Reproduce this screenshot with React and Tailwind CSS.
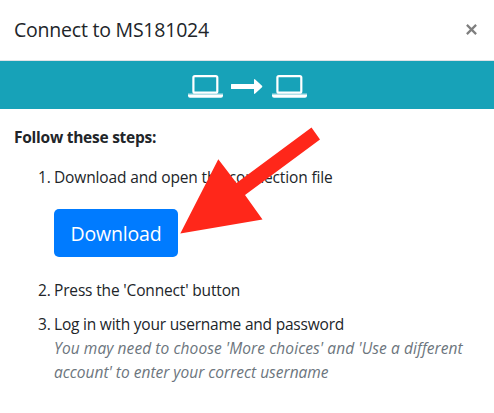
function Laptop() {
  return (
    <svg className="h-[23px] w-[35px]" viewBox="0 0 35 23" fill="none" aria-hidden="true">
      <rect x="5.4" y="1.1" width="23.900" height="16.600" rx="1.500" stroke="#fff" strokeWidth="2.200" />
      <path d="M0 18.500h35v1H0z" fill="#fff" fillOpacity=".65" />
      <path d="M0 19.500h35v1.200q0 2-2 2H2q-2 0-2-2z" fill="#fff" />
    </svg>
  );
}

function RightArrow() {
  return (
    <svg className="h-[16px] w-[32px]" viewBox="0 0 32 16" aria-hidden="true">
      <path d="M.5 5H23V1q0-1.500 1.200-.6l6.800 6.400q.6.700 0 1.400l-6.800 6.400Q23 15.500 23 14v-4H.5Q0 10 0 9.500v-4Q0 5 .5 5z" fill="#fff" />
    </svg>
  );
}

export default function App() {
  return (
    <div className="relative h-[413px] w-[494px] overflow-hidden bg-white font-['Open_Sans','Noto_Sans',sans-serif] text-[15.5px] leading-6 text-[#212529]">
      <header className="flex h-[61px] items-center justify-between border-b border-[#dee2e6] pl-[14px] pr-[17px]">
        <h1 className="whitespace-nowrap text-[19.5px] font-medium leading-[30px] tracking-[-0.22px]">Connect to MS181024</h1>
        <button type="button" aria-label="Close" className="mb-[2px] flex">
          <svg className="h-[11px] w-[11px]" viewBox="0 0 10 10" aria-hidden="true">
            <path d="M.8.8l8.400 8.400M9.200.8L.8 9.200" stroke="#7f7f7f" strokeWidth="2" />
          </svg>
        </button>
      </header>

      <div className="flex h-12 items-start bg-[#17a2b8] pl-[188px] pt-[14px]">
        <Laptop />
        <span className="ml-2 mr-[9px] mt-[4px] flex"><RightArrow /></span>
        <Laptop />
      </div>

      <main className="pl-[14px] pt-4">
        <p className="mb-4 flex"><strong className="whitespace-nowrap font-bold tracking-[-0.25px]">Follow these steps:</strong></p>
        <ol>
          <li className="flex">
            <span className="w-10 pl-6">1.</span>
            <div>
              <p className="flex"><span className="whitespace-nowrap tracking-[-0.14px]">Download and open the connection file</span></p>
              <button type="button" className="mt-5 flex h-12 w-[124px] items-center justify-center rounded-[5px] bg-[#007bff] pt-[2px] text-[19.5px] leading-[30px] text-white">
                <span className="tracking-[-0.17px]">Download</span>
              </button>
            </div>
          </li>
          <li className="mt-[21px] flex">
            <span className="w-10 pl-6">2.</span>
            <span className="whitespace-nowrap tracking-[-0.16px]">Press the 'Connect' button</span>
          </li>
          <li className="mt-[10px] flex">
            <span className="w-10 pl-6">3.</span>
            <div className="flex flex-col items-start whitespace-nowrap">
              <span className="tracking-[-0.21px]">Log in with your username and password</span>
              <em className="tracking-[0.08px] text-[#6c757d]">You may need to choose 'More choices' and 'Use a different</em>
              <em className="tracking-[0px] text-[#6c757d]">account' to enter your correct username</em>
            </div>
          </li>
        </ol>
      </main>

      <svg className="pointer-events-none absolute left-0 top-0 h-[413px] w-[494px]" viewBox="0 0 494 413" aria-hidden="true">
        <path d="M180.300 233.600L218.300 159.300L236.500 183L311.500 127.500L320 139.500L245 195L262.500 219.500z" fill="#ff271a" />
      </svg>
    </div>
  );
}
